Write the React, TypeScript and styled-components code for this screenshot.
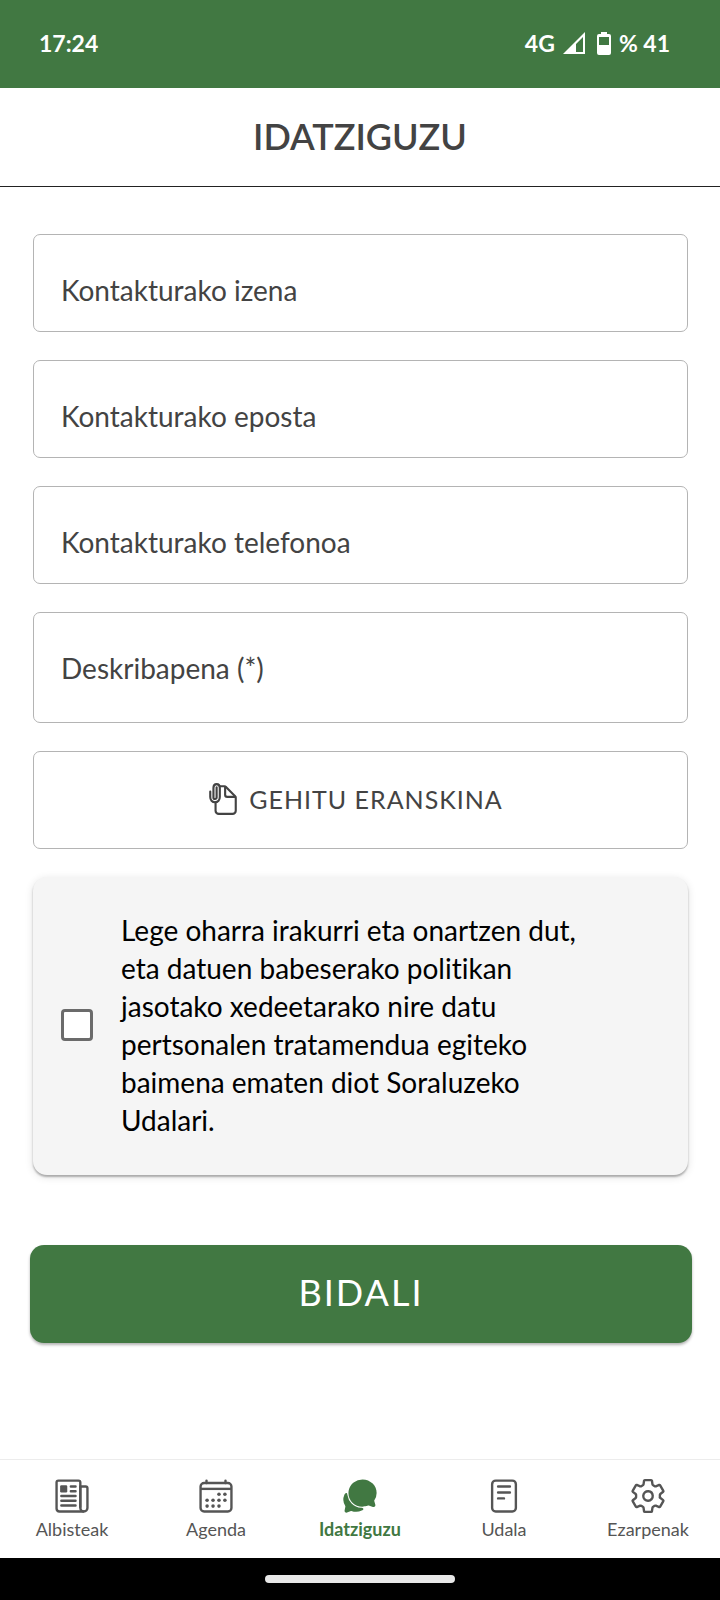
import React from "react";
import styled, { createGlobalStyle } from "styled-components";
import {
  IoCalendarOutline,
  IoChatbubbles,
  IoDocumentAttachOutline,
  IoNewspaperOutline,
  IoReaderOutline,
  IoSettingsOutline,
} from "react-icons/io5";

const GREEN = "#417842";
const INK = "#434343";

const GlobalStyle = createGlobalStyle`
  * { box-sizing: border-box; }
  body {
    margin: 0;
    background: #fff;
    color: ${INK};
    font-family: Lato, "Open Sans", sans-serif;
    font-variant-ligatures: none;
  }
  button, input, textarea { font: inherit; color: inherit; margin: 0; }
`;

const Screen = styled.div`
  display: flex;
  flex-direction: column;
  min-height: 100vh;
`;

const StatusBar = styled.div`
  display: flex;
  align-items: center;
  justify-content: space-between;
  height: 88px;
  padding: 0 50px 2px 39px;
  background: ${GREEN};
  color: #fff;
  font-size: 23px;
  font-weight: 700;
`;

const StatusGroup = styled.div`
  display: flex;
  align-items: center;
  gap: 8px;
`;

const StatusIcon = styled.svg`
  display: block;
  &:not(:first-of-type) { margin-left: 4px; }
`;

const Header = styled.header`
  display: flex;
  align-items: center;
  justify-content: center;
  height: 99px;
  padding-bottom: 2px;
  border-bottom: 1px solid #222;
`;

const Title = styled.h1`
  margin: 0;
  font-size: 36px;
  line-height: 44px;
  font-weight: 600;
`;

const Form = styled.form`
  flex: 1;
  display: flex;
  flex-direction: column;
  gap: 28px;
  padding: 47px 32px 28px 33px;
`;

const Field = styled.input`
  width: 100%;
  height: 98px;
  padding: 14px 27px 0;
  border: 1px solid #b4b4b4;
  border-radius: 7px;
  background: #fff;
  font-size: 28px;
  &::placeholder { color: ${INK}; opacity: 1; }
`;

const Area = styled.textarea`
  display: block;
  width: 100%;
  height: 111px;
  padding: 37px 27px 0;
  border: 1px solid #b4b4b4;
  border-radius: 7px;
  background: #fff;
  font-size: 28px;
  line-height: 36px;
  resize: none;
  overflow: hidden;
  &::placeholder { color: ${INK}; opacity: 1; }
`;

const AttachButton = styled.button`
  display: flex;
  align-items: center;
  justify-content: center;
  gap: 9px;
  height: 98px;
  padding: 0 12px 3px 0;
  border: 1px solid #b4b4b4;
  border-radius: 7px;
  background: #fff;
  font-size: 25px;
  letter-spacing: 1px;
`;

const ConsentCard = styled.label`
  display: flex;
  align-items: center;
  gap: 28px;
  padding: 34px 84px 36px 28px;
  border-radius: 14px;
  background: #f5f5f5;
  color: #000;
  font-size: 28px;
  line-height: 38px;
  box-shadow: 0 2px 2px rgba(0, 0, 0, 0.28), 0 2px 8px rgba(0, 0, 0, 0.12);
`;

const Checkbox = styled.input`
  appearance: none;
  flex: none;
  width: 32px;
  height: 32px;
  border: 3px solid #6b6b6b;
  border-radius: 4px;
  background: #fff;
  &:checked { background: ${GREEN}; }
`;

const SubmitButton = styled.button`
  height: 98px;
  margin: 42px -4px 0 -3px;
  padding: 0 0 4px;
  border: 0;
  border-radius: 14px;
  background: ${GREEN};
  color: #fff;
  font-size: 36px;
  letter-spacing: 2px;
  box-shadow: 0 2px 3px rgba(0, 0, 0, 0.3);
`;

const TabBar = styled.nav`
  display: grid;
  grid-template-columns: repeat(5, 1fr);
  height: 99px;
  border-top: 1px solid #ececec;
`;

const Tab = styled.a<{ $active?: boolean }>`
  display: flex;
  flex-direction: column;
  align-items: center;
  gap: 2px;
  padding-top: 17px;
  color: ${(p) => (p.$active ? GREEN : "#555")};
  font-size: 18px;
  line-height: 24px;
  font-weight: ${(p) => (p.$active ? 700 : 400)};
  text-decoration: none;
`;

const GestureBar = styled.div`
  display: flex;
  align-items: center;
  justify-content: center;
  height: 42px;
  background: #000;
`;

const GestureHandle = styled.div`
  width: 190px;
  height: 8px;
  border-radius: 4px;
  background: #e8e8e8;
`;

const SignalIcon = () => (
  <StatusIcon width="22" height="22" viewBox="0 0 22 22" aria-hidden="true">
    <path fill="#fff" fillRule="evenodd" d="M22 0V22H0ZM20 5L13 12V20H20Z" />
  </StatusIcon>
);

const BatteryIcon = () => (
  <StatusIcon width="14" height="23" viewBox="0 0 14 23" aria-hidden="true">
    <path
      fill="#fff"
      fillRule="evenodd"
      d="M4 0H10V2H12Q14 2 14 4V21Q14 23 12 23H2Q0 23 0 21V4Q0 2 2 2H4ZM2 5V13H12V5Z"
    />
  </StatusIcon>
);

const tabs = [
  { label: "Albisteak", Icon: IoNewspaperOutline },
  { label: "Agenda", Icon: IoCalendarOutline },
  { label: "Idatziguzu", Icon: IoChatbubbles, active: true },
  { label: "Udala", Icon: IoReaderOutline },
  { label: "Ezarpenak", Icon: IoSettingsOutline },
];

export default function App() {
  return (
    <Screen>
      <GlobalStyle />
      <StatusBar>
        <span>17:24</span>
        <StatusGroup>
          <span>4G</span>
          <SignalIcon />
          <BatteryIcon />
          <span>% 41</span>
        </StatusGroup>
      </StatusBar>
      <Header>
        <Title>IDATZIGUZU</Title>
      </Header>
      <Form onSubmit={(e) => e.preventDefault()}>
        <Field type="text" aria-label="Kontakturako izena" placeholder="Kontakturako izena" />
        <Field type="email" aria-label="Kontakturako eposta" placeholder="Kontakturako eposta" />
        <Field type="tel" aria-label="Kontakturako telefonoa" placeholder="Kontakturako telefonoa" />
        <Area aria-label="Deskribapena (*)" placeholder="Deskribapena (*)" />
        <AttachButton type="button">
          <IoDocumentAttachOutline size={34} aria-hidden="true" />
          GEHITU ERANSKINA
        </AttachButton>
        <ConsentCard>
          <Checkbox type="checkbox" />
          <span>
            Lege oharra irakurri eta onartzen dut, eta datuen babeserako politikan jasotako
            xedeetarako nire datu pertsonalen tratamendua egiteko baimena ematen diot Soraluzeko
            Udalari.
          </span>
        </ConsentCard>
        <SubmitButton type="submit">BIDALI</SubmitButton>
      </Form>
      <TabBar>
        {tabs.map(({ label, Icon, active }) => (
          <Tab key={label} href="#" $active={active} aria-current={active ? "page" : undefined}>
            <Icon size={38} aria-hidden="true" />
            {label}
          </Tab>
        ))}
      </TabBar>
      <GestureBar>
        <GestureHandle />
      </GestureBar>
    </Screen>
  );
}
